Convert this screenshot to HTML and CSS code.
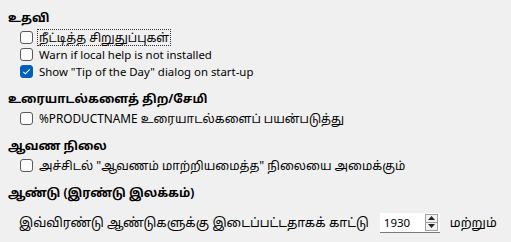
FILE: index.html
```html
<!DOCTYPE html>
<html>
<head>
<meta charset="utf-8">
<link rel="stylesheet" href="styles.css">
</head>
<body>
<div class="page">
  <section class="group">
    <div class="heading">உதவி</div>
    <div class="rows">
      <label class="row"><span class="cb"></span><span class="label focus">நீட்டித்த சிறுதுப்புகள்</span></label>
      <label class="row"><span class="cb"></span><span class="label en">Warn if local help is not installed</span></label>
      <label class="row"><span class="cb checked"><svg viewBox="0 0 13 13" width="13" height="13"><path d="M3.3 6.8 L5.4 8.8 L9.7 4.4" fill="none" stroke="#fff" stroke-width="1.1"/></svg></span><span class="label en">Show "Tip of the Day" dialog on start-up</span></label>
    </div>
  </section>
  <section class="group">
    <div class="heading">உரையாடல்களைத் திற/சேமி</div>
    <div class="rows">
      <label class="row"><span class="cb"></span><span class="label"><span class="caps">%PRODUCTNAME</span> உரையாடல்களைப் பயன்படுத்து</span></label>
    </div>
  </section>
  <section class="group">
    <div class="heading">ஆவண நிலை</div>
    <div class="rows">
      <label class="row"><span class="cb"></span><span class="label">அச்சிடல் "ஆவணம் மாற்றியமைத்த" நிலையை அமைக்கும்</span></label>
    </div>
  </section>
  <section class="group">
    <div class="heading">ஆண்டு (இரண்டு இலக்கம்)</div>
    <div class="year">
      <span class="ytext">இவ்விரண்டு ஆண்டுகளுக்கு இடைப்பட்டதாகக் காட்டு</span>
      <span class="spin">
        <span class="spin-val">1930</span>
        <span class="spin-btns">
          <span class="sbtn"><svg viewBox="0 0 7 4" width="7" height="4"><path d="M0 4 L3.5 0 L7 4Z" fill="#222"/></svg></span>
          <span class="sbtn"><svg viewBox="0 0 7 4" width="7" height="4"><path d="M0 0 L3.5 4 L7 0Z" fill="#222"/></svg></span>
        </span>
      </span>
      <span class="ytext">மற்றும்</span>
    </div>
  </section>
</div>
</body>
</html>
```
FILE: styles.css
```css
html, body {
  margin: 0;
  padding: 0;
  background: #f0f0f0;
}
body {
  font-family: "Segoe UI", "Noto Sans", "Noto Sans Tamil", "Lohit Tamil", sans-serif;
  font-size: 12px;
  color: #000;
}
.en {
  font-size: 11.4px;
}
.caps {
  font-size: 11.8px;
}
.page {
  padding: 9px 0 0 8px;
  display: flex;
  flex-direction: column;
  gap: 10px;
}
.group {
  display: flex;
  flex-direction: column;
}
.heading {
  font-weight: bold;
  height: 17px;
  line-height: 17px;
  margin-bottom: 3px;
}
.rows {
  display: flex;
  flex-direction: column;
  padding-left: 12px;
}
.row {
  display: flex;
  align-items: center;
  height: 17px;
  gap: 4px;
}
.cb {
  width: 11px;
  height: 11px;
  border: 1px solid #5a5a5a;
  border-radius: 3px;
  background: #fbfbfb;
  flex: none;
  display: flex;
}
.cb.checked {
  background: #005fb8;
  border-color: #005fb8;
}
.cb.checked svg {
  margin: -1px;
}
.label {
  white-space: nowrap;
  line-height: 15px;
  padding: 0 1px;
  border: 1px dotted transparent;
}
.label.focus {
  border-color: #333;
}
.year {
  display: flex;
  align-items: center;
  padding-left: 11px;
  margin-top: 8px;
  height: 21px;
}
.ytext {
  white-space: nowrap;
  font-size: 12.6px;
}
.spin {
  margin-left: 11px;
  margin-right: 10px;
  display: flex;
  width: 60px;
  height: 20px;
  background: #fff;
  border-bottom: 1px solid #7a7a7a;
  box-sizing: border-box;
}
.spin-val {
  flex: 1;
  padding-left: 4px;
  line-height: 19px;
  font-size: 11.5px;
}
.spin-btns {
  display: flex;
  flex-direction: column;
  width: 13px;
  margin: 1px 2px 1px 0;
  border: 1px solid #a0a0a0;
  box-sizing: border-box;
}
.sbtn {
  flex: 1;
  display: flex;
  align-items: center;
  justify-content: center;
  background: #f3f3f3;
}
.sbtn + .sbtn {
  border-top: 1px solid #a0a0a0;
}
```
